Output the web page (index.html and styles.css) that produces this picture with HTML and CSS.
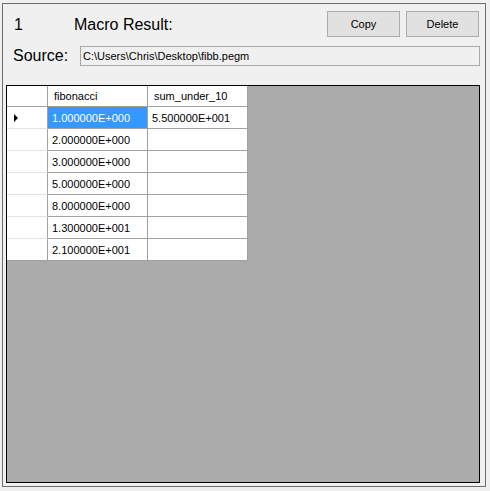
FILE: index.html
```html
<!DOCTYPE html>
<html>
<head>
<meta charset="utf-8">
<link rel="stylesheet" href="styles.css">
</head>
<body>
<div class="panel">
  <div class="top-row">
    <span class="index">1</span>
    <span class="title">Macro Result:</span>
    <div class="buttons">
      <button class="btn">Copy</button>
      <button class="btn">Delete</button>
    </div>
  </div>
  <div class="source-row">
    <span class="source-label">Source:</span>
    <div class="textbox">C:\Users\Chris\Desktop\fibb.pegm</div>
  </div>
  <div class="grid-view">
    <div class="table">
      <div class="cell corner"></div>
      <div class="cell head">fibonacci</div>
      <div class="cell head">sum_under_10</div>

      <div class="cell rowhead"><span class="arrow"></span></div>
      <div class="cell data selected">1.000000E+000</div>
      <div class="cell data">5.500000E+001</div>

      <div class="cell rowhead"></div>
      <div class="cell data">2.000000E+000</div>
      <div class="cell data"></div>

      <div class="cell rowhead"></div>
      <div class="cell data">3.000000E+000</div>
      <div class="cell data"></div>

      <div class="cell rowhead"></div>
      <div class="cell data">5.000000E+000</div>
      <div class="cell data"></div>

      <div class="cell rowhead"></div>
      <div class="cell data">8.000000E+000</div>
      <div class="cell data"></div>

      <div class="cell rowhead"></div>
      <div class="cell data">1.300000E+001</div>
      <div class="cell data"></div>

      <div class="cell rowhead last"></div>
      <div class="cell data">2.100000E+001</div>
      <div class="cell data"></div>
    </div>
  </div>
</div>
</body>
</html>
```
FILE: styles.css
```css
html, body {
  margin: 0;
  padding: 0;
  background: #f0f0f0;
  font-family: "Liberation Sans", Arial, sans-serif;
  color: #000;
}

.panel {
  box-sizing: border-box;
  margin: 3px 0 0 2px;
  width: 484px;
  height: 484px;
  border: 1px solid #6d6d6d;
  padding: 7px 5px 3px 3px;
  display: flex;
  flex-direction: column;
}

.top-row {
  display: flex;
  align-items: center;
  height: 26px;
}

.index {
  font-size: 16px;
  margin-left: 8px;
  width: 50px;
  margin-top: 1px;
}

.title {
  font-size: 16px;
  margin-left: 10px;
  margin-top: 1px;
}

.buttons {
  margin-left: auto;
  display: flex;
  gap: 6px;
  margin-right: 1px;
}

.btn {
  box-sizing: border-box;
  width: 73px;
  height: 26px;
  background: #e1e1e1;
  border: 1px solid #adadad;
  font-family: "Liberation Sans", Arial, sans-serif;
  font-size: 11px;
  color: #000;
  padding: 0;
}

.source-row {
  display: flex;
  align-items: center;
  margin-top: 9px;
  height: 20px;
}

.source-label {
  font-size: 16px;
  margin-left: 7px;
  width: 67px;
}

.textbox {
  box-sizing: border-box;
  flex: 1;
  height: 20px;
  border: 1px solid #a8a8a8;
  background: #f0f0f0;
  font-size: 11px;
  line-height: 18px;
  padding-left: 2px;
  white-space: nowrap;
}

.grid-view {
  margin-top: 19px;
  flex: 1;
  border: 1px solid #000;
  background: #ababab;
  width: 472px;
}

.table {
  display: grid;
  grid-template-columns: 41px 100px 100px;
  grid-template-rows: 21px repeat(7, 22px);
  width: 241px;
  background: #fff;
}

.cell {
  box-sizing: border-box;
  border-right: 1px solid #a0a0a0;
  border-bottom: 1px solid #a0a0a0;
  font-size: 11px;
  white-space: nowrap;
  display: flex;
  align-items: center;
}

.head {
  padding-left: 6px;
}

.rowhead {
  border-bottom-color: #e3e3e3;
  padding-left: 7px;
}

.rowhead.last {
  border-bottom-color: #a0a0a0;
}

.data {
  padding-left: 4px;
}

.selected {
  background: #3399ff;
  color: #fff;
}

.arrow {
  width: 0;
  height: 0;
  border-top: 4px solid transparent;
  border-bottom: 4px solid transparent;
  border-left: 4px solid #000;
}
```
